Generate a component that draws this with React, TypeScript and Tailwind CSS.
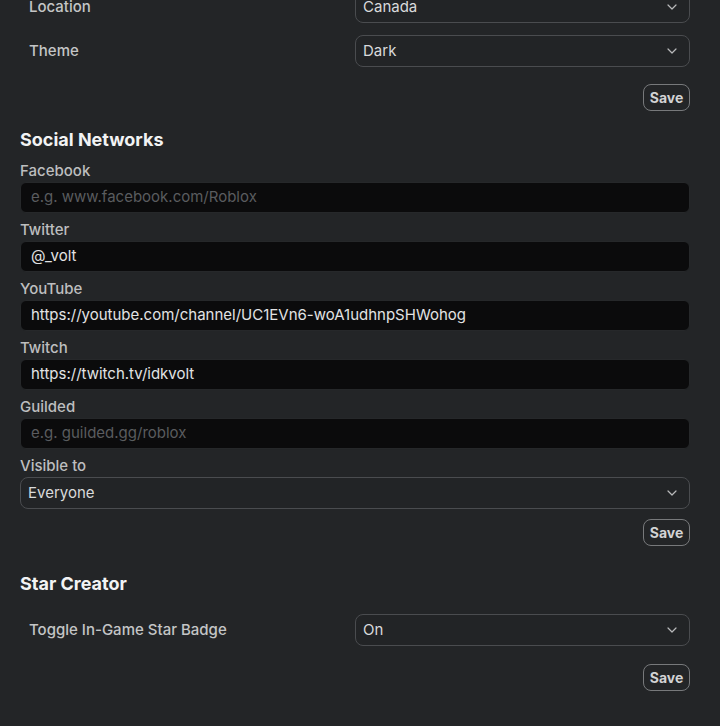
import React from 'react';

const font = { fontFamily: 'Inter, "Noto Sans", sans-serif' };

function Chevron() {
  return (
    <svg width="10" height="6" viewBox="0 0 10 6" fill="none" className="shrink-0">
      <path d="M1 1l4 4 4-4" stroke="#b8b9ba" strokeWidth="1.2" strokeLinecap="round" strokeLinejoin="round" />
    </svg>
  );
}

function Select({ value }: { value: string }) {
  return (
    <div className="h-[32px] flex items-center justify-between rounded-[8px] border border-[#4a4c4f] bg-[#222426] pl-[7px] pr-[12px]">
      <span className="text-[15px] text-[#d9dadb]">{value}</span>
      <Chevron />
    </div>
  );
}

function SaveButton() {
  return (
    <div className="flex justify-end">
      <button className="h-[27px] w-[47px] rounded-[8px] border border-[#77797b] text-[14px] font-bold text-[#d2d3d4]">
        Save
      </button>
    </div>
  );
}

function RowSetting({ label, value }: { label: string; value: string }) {
  return (
    <div className="grid grid-cols-2 items-center">
      <span className="pl-[9px] text-[15px] font-medium text-[#c4c5c6]">{label}</span>
      <Select value={value} />
    </div>
  );
}

function TextField({ label, value, placeholder }: { label: string; value?: string; placeholder?: string }) {
  return (
    <div className="flex flex-col">
      <span className="h-[22px] leading-[22px] text-[15px] font-medium text-[#bdbebf]">{label}</span>
      <div className="h-[31px] flex items-center rounded-[6px] border border-[#26282a] bg-[#0b0b0c] px-[10px]">
        {value ? (
          <span className="text-[15px] text-[#e2e3e4]">{value}</span>
        ) : (
          <span className="text-[15px] text-[#5a5c5f]">{placeholder}</span>
        )}
      </div>
    </div>
  );
}

export default function App() {
  return (
    <div className="min-h-[726px] w-full overflow-hidden bg-[#232527]" style={font}>
      <div className="px-[20px] pr-[30px]">
        {/* account info tail */}
        <div className="mt-[-9px] flex flex-col gap-[12px]">
          <RowSetting label="Location" value="Canada" />
          <RowSetting label="Theme" value="Dark" />
        </div>
        <div className="mt-[17px]">
          <SaveButton />
        </div>

        {/* social networks */}
        <h2 className="mt-[17px] text-[18px] font-bold leading-[24px] text-[#f2f3f4]">Social Networks</h2>
        <div className="mt-[8px] flex flex-col gap-[6px]">
          <TextField label="Facebook" placeholder="e.g. www.facebook.com/Roblox" />
          <TextField label="Twitter" value="@_volt" />
          <TextField label="YouTube" value="https://youtube.com/channel/UC1EVn6-woA1udhnpSHWohog" />
          <TextField label="Twitch" value="https://twitch.tv/idkvolt" />
          <TextField label="Guilded" placeholder="e.g. guilded.gg/roblox" />
          <div className="flex flex-col">
            <span className="h-[22px] leading-[22px] text-[15px] font-medium text-[#bdbebf]">Visible to</span>
            <Select value="Everyone" />
          </div>
        </div>
        <div className="mt-[10px]">
          <SaveButton />
        </div>

        {/* star creator */}
        <h2 className="mt-[26px] text-[18px] font-bold leading-[24px] text-[#f2f3f4]">Star Creator</h2>
        <div className="mt-[18px]">
          <RowSetting label="Toggle In-Game Star Badge" value="On" />
        </div>
        <div className="mt-[18px]">
          <SaveButton />
        </div>
      </div>
    </div>
  );
}
